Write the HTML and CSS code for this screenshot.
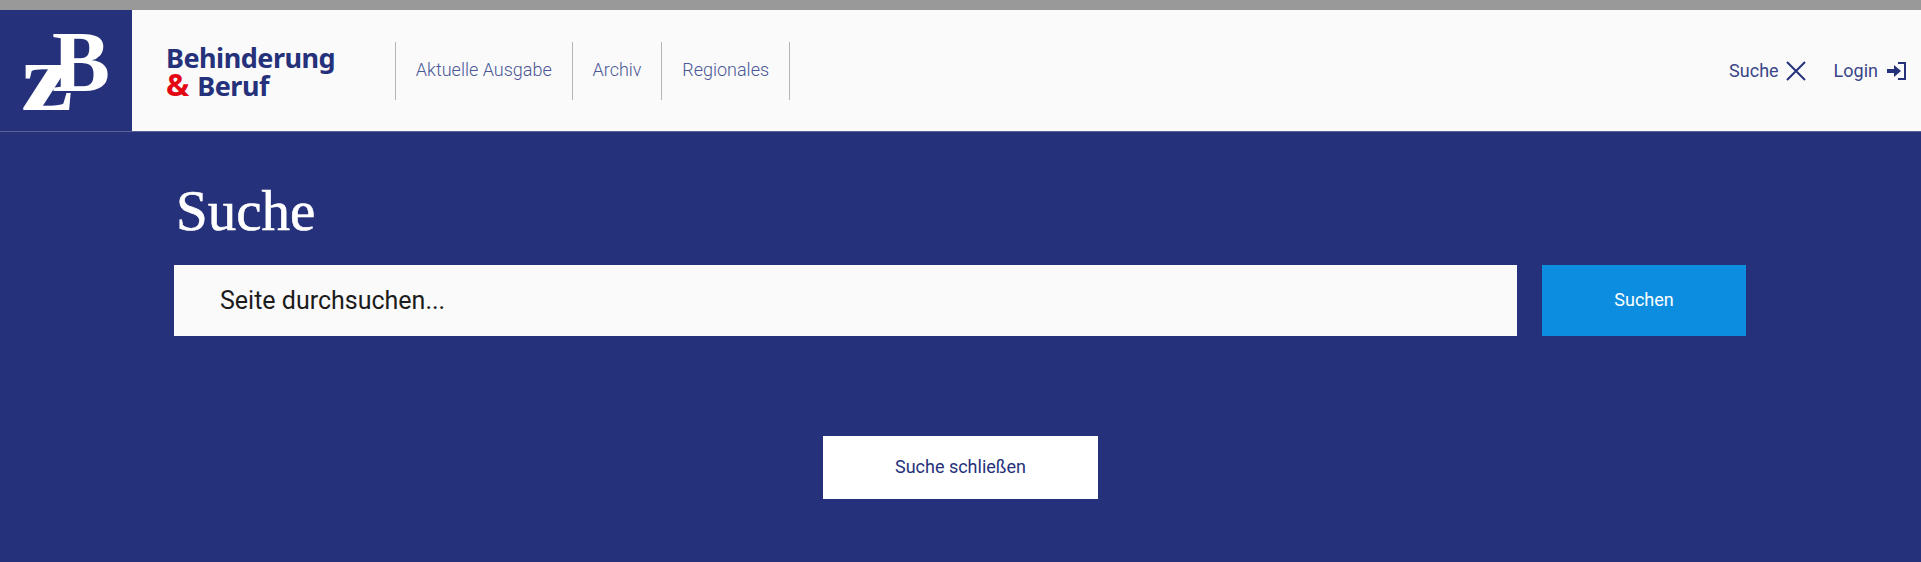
FILE: index.html
```html
<!DOCTYPE html>
<html lang="de">
<head>
    <meta charset="UTF-8">
    <title>Suche - Behinderung &amp; Beruf</title>
    <link rel="stylesheet" href="styles.css">
</head>
<body>
    <div class="top-bar"></div>
    <header class="header">
        <a class="logo" href="#"><span class="logo-z">z</span><span class="logo-b">B</span></a>
        <a class="brand" href="#">
            <span>Behinderung</span>
            <span><span class="brand-amp">&amp;</span> Beruf</span>
        </a>
        <nav class="main-nav">
            <a href="#">Aktuelle Ausgabe</a>
            <a href="#">Archiv</a>
            <a href="#">Regionales</a>
        </nav>
        <div class="tools">
            <a class="tool-search" href="#">Suche
                <svg width="20" height="20" viewBox="0 0 20 20"><path d="M1 1L19 19M19 1L1 19" fill="none" stroke="#25317a" stroke-width="2"/></svg>
            </a>
            <a href="#">Login
                <svg width="20" height="20" viewBox="0 0 20 20"><path d="M0 8h7V4l7 6-7 6v-4H0z" fill="#25317a"/><path d="M11 2h7v16h-7" fill="none" stroke="#25317a" stroke-width="2"/></svg>
            </a>
        </div>
    </header>
    <main class="search-panel">
        <h1>Suche</h1>
        <form class="search-form">
            <input class="search-input" type="text" placeholder="Seite durchsuchen...">
            <button class="search-btn" type="button">Suchen</button>
        </form>
        <div class="close-row">
            <button class="close-btn" type="button">Suche schließen</button>
        </div>
    </main>
</body>
</html>
```

FILE: styles.css
```css
body {
    margin: 0;
    background-color: #25317a;
    font-family: Roboto, Arial, sans-serif;
    overflow: hidden;
}
a {
    text-decoration: none;
}
.top-bar {
    height: 10px;
    background-color: #999;
}
.header {
    display: flex;
    align-items: center;
    height: 122px;
    box-sizing: border-box;
    border-bottom: 1px solid #5a6394;
    background-color: #fafafa;
}
.logo {
    position: relative;
    flex: 0 0 132px;
    height: 121px;
    background-color: #25317a;
    color: white;
    font-family: "Liberation Serif", serif;
    font-weight: bold;
}
.logo-z {
    position: absolute;
    left: 21px;
    top: 18px;
    font-size: 98px;
    line-height: 98px;
    transform: scaleX(1.2);
    transform-origin: left;
}
.logo-b {
    position: absolute;
    left: 52px;
    top: 8px;
    font-size: 87px;
    line-height: 87px;
}
.brand {
    display: flex;
    flex-direction: column;
    margin-left: 34px;
    padding-top: 2px;
    width: 229px;
    color: #25317a;
    font-family: "Noto Sans", sans-serif;
    font-size: 27px;
    font-weight: bold;
    line-height: 27px;
    letter-spacing: -0.5px;
}
.brand-amp {
    margin-right: 2px;
    color: #e30613;
    font-size: 31px;
    line-height: 27px;
}
.main-nav {
    display: flex;
    height: 58px;
    border-left: 1px solid #b5b5b5;
}
.main-nav a {
    display: flex;
    align-items: center;
    padding: 0 19.85px 2px;
    border-right: 1px solid #b5b5b5;
    color: #4a5797;
    font-size: 18px;
    font-weight: 300;
}
.tools {
    display: flex;
    gap: 28px;
    margin-left: auto;
    padding-right: 14px;
}
.tools a {
    display: flex;
    align-items: center;
    gap: 9px;
    color: #3a4588;
    font-size: 18px;
}
.tools a.tool-search {
    gap: 7px;
}
.search-panel {
    padding: 0 174px;
}
h1 {
    margin: 0;
    padding: 46px 0 0 2px;
    height: 86px;
    color: white;
    font-family: "Liberation Serif", serif;
    font-size: 57px;
    font-weight: normal;
    line-height: 66px;
    -webkit-text-stroke: 0.6px white;
    box-sizing: border-box;
}
.search-form {
    display: flex;
    gap: 25px;
    margin-top: 47px;
    width: 1572px;
}
.search-input {
    flex: 0 0 1343px;
    height: 71px;
    box-sizing: border-box;
    padding: 0 46px;
    border: none;
    background-color: #fafafa;
    font-family: Roboto, sans-serif;
    font-size: 25px;
}
.search-input::placeholder {
    color: #1c1c1c;
    opacity: 1;
}
.search-btn {
    flex: 0 0 204px;
    height: 71px;
    padding-bottom: 3px;
    border: none;
    background-color: #0d8ddf;
    color: white;
    font-family: Roboto, sans-serif;
    font-size: 18px;
}
.close-row {
    display: flex;
    justify-content: center;
    margin-top: 100px;
}
.close-btn {
    width: 275px;
    height: 63px;
    padding-bottom: 3px;
    border: none;
    background-color: white;
    color: #25317a;
    font-family: Roboto, sans-serif;
    font-size: 18px;
}
```
